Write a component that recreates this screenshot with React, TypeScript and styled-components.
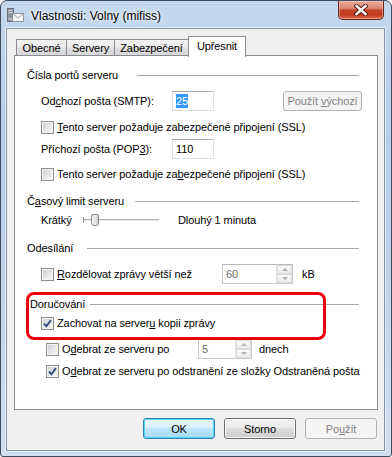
import styled, { createGlobalStyle } from "styled-components";

const GlobalStyle = createGlobalStyle`
  html, body { margin: 0; padding: 0; background: #ffffff; }
  body {
    font-family: "Liberation Sans", Arial, sans-serif;
    font-size: 11px;
    letter-spacing: -0.1px;
    color: #000;
  }
  * { box-sizing: border-box; }
`;

const Window = styled.div`
  width: 392px;
  height: 457px;
  display: flex;
  flex-direction: column;
  border: 1px solid #3e4d5f;
  border-radius: 7px 7px 3px 3px;
  background: linear-gradient(180deg, #c3d8ee 0%, #b6cee8 30%, #c2d6ec 70%, #cfdff1 100%);
  padding: 0 6px 5px 5px;
  overflow: hidden;
`;

const TitleBar = styled.div`
  height: 27px;
  flex: none;
  display: flex;
  align-items: flex-start;
`;

const TitleIcon = styled.svg`
  margin: 7px 0 0 1px;
  flex: none;
`;

const TitleText = styled.span`
  margin: 8px 0 0 7px;
  font-size: 12px;
  line-height: 14px;
  letter-spacing: 0;
  color: #000;
  text-shadow: 0 0 6px #ffffff, 0 0 3px #ffffff;
`;

const CloseButton = styled.div`
  margin-left: auto;
  margin-right: 1px;
  width: 46px;
  height: 19px;
  border: 1px solid #6b2418;
  border-top: none;
  border-radius: 0 0 5px 5px;
  background: linear-gradient(180deg, #e9a99a 0%, #dc8a76 40%, #c5442b 50%, #c0391f 75%, #d66a4d 100%);
  box-shadow: inset 0 0 0 1px rgba(255, 220, 210, 0.45);
  display: flex;
  align-items: center;
  justify-content: center;
`;

const Client = styled.div`
  flex: 1;
  display: flex;
  flex-direction: column;
  background: #f0f0f0;
  border: 1px solid #8595a9;
  box-shadow: 0 0 0 1px rgba(255, 255, 255, 0.55);
  padding: 7px 6px 0 7px;
`;

const TabRow = styled.div`
  height: 19px;
  flex: none;
  display: flex;
  align-items: flex-end;
  padding-left: 2px;
  position: relative;
  z-index: 1;
`;

const Tab = styled.div<{ $width: number; $active?: boolean }>`
  width: ${(p) => p.$width}px;
  height: ${(p) => (p.$active ? 21 : 16)}px;
  margin-left: -1px;
  margin-bottom: ${(p) => (p.$active ? -2 : 0)}px;
  border: 1px solid #898c95;
  border-bottom: none;
  background: ${(p) =>
    p.$active ? "#ffffff" : "linear-gradient(180deg, #f3f3f3 0%, #ebebeb 45%, #dedede 55%, #d8d8d8 100%)"};
  display: flex;
  align-items: ${(p) => (p.$active ? "flex-start" : "center")};
  justify-content: center;
  padding-top: ${(p) => (p.$active ? 3 : 0)}px;
  &:first-child { margin-left: 0; }
`;

const Panel = styled.div`
  height: 355px;
  flex: none;
  border: 1px solid #898c95;
  background: #ffffff;
  position: relative;
  display: flex;
  flex-direction: column;
  padding: 0 18px 0 12px;
`;

const Header = styled.div<{ $top: number }>`
  height: 16px;
  margin-top: ${(p) => p.$top}px;
  display: flex;
  align-items: center;
`;

const HeaderLabel = styled.span<{ $width: number; $pad?: number }>`
  width: ${(p) => p.$width}px;
  padding-left: ${(p) => p.$pad ?? 0}px;
  flex: none;
  white-space: nowrap;
`;

const Rule = styled.div`
  flex: 1;
  height: 0;
  border-top: 1px solid #a6a6a6;
`;

const Row = styled.div<{ $top: number; $indent?: number; $height?: number }>`
  height: ${(p) => p.$height ?? 16}px;
  margin-top: ${(p) => p.$top}px;
  padding-left: ${(p) => p.$indent ?? 14}px;
  display: flex;
  align-items: center;
  white-space: nowrap;
`;

const FieldLabel = styled.span<{ $width: number }>`
  width: ${(p) => p.$width}px;
  flex: none;
`;

const CheckItem = styled.label<{ $width?: number }>`
  display: flex;
  align-items: center;
  gap: 3px;
  flex: none;
  width: ${(p) => (p.$width ? `${p.$width}px` : "auto")};
`;

const Box = styled.span`
  width: 13px;
  height: 13px;
  flex: none;
  border: 1px solid #8e8f8f;
  background: linear-gradient(135deg, #cbcfd5 0%, #e6e7e9 55%, #f8f8f8 100%);
  box-shadow: inset 0 0 0 1px #f4f4f4;
  display: flex;
  align-items: center;
  justify-content: center;
`;

const TextBox = styled.div<{ $width: number; $disabled?: boolean }>`
  width: ${(p) => p.$width}px;
  height: 20px;
  flex: none;
  border: 1px solid ${(p) => (p.$disabled ? "#c9cbcf" : "#dbdfe6")};
  border-top-color: ${(p) => (p.$disabled ? "#b8babe" : "#abadb3")};
  background: #ffffff;
  color: ${(p) => (p.$disabled ? "#6d6d6d" : "#000")};
  display: flex;
  align-items: center;
  padding-left: 3px;
  position: relative;
`;

const Selected = styled.span`
  background: #3399ff;
  color: #ffffff;
  padding: 1px 0;
`;

const SpinButtons = styled.div`
  margin-left: auto;
  width: 16px;
  height: 100%;
  display: flex;
  flex-direction: column;
  border-left: 1px solid #e3e3e3;
`;

const SpinHalf = styled.div`
  flex: 1;
  background: linear-gradient(180deg, #fafafa, #ececec);
  border: 1px solid #dcdcdc;
  display: flex;
  align-items: center;
  justify-content: center;
`;

const Arrow = styled.span<{ $up?: boolean }>`
  width: 0;
  height: 0;
  border-left: 3px solid transparent;
  border-right: 3px solid transparent;
  ${(p) => (p.$up ? "border-bottom: 3px solid #b4b4b4;" : "border-top: 3px solid #b4b4b4;")}
`;

const Unit = styled.span<{ $gap: number }>`
  margin-left: ${(p) => p.$gap}px;
`;

const Button = styled.div<{ $width: number; $focused?: boolean; $disabled?: boolean }>`
  width: ${(p) => p.$width}px;
  height: 21px;
  flex: none;
  border: 1px solid ${(p) => (p.$focused ? "#3c7fb1" : p.$disabled ? "#adb2b5" : "#707070")};
  border-radius: 3px;
  background: ${(p) =>
    p.$disabled
      ? "#f4f4f4"
      : p.$focused
      ? "linear-gradient(180deg, #eaf6fd 0%, #d9f0fc 45%, #bee6fd 50%, #a7d9f5 100%)"
      : "linear-gradient(180deg, #f2f2f2 0%, #ebebeb 45%, #dddddd 50%, #cfcfcf 100%)"};
  box-shadow: ${(p) =>
    p.$focused ? "inset 0 0 0 1px #48d8fb" : p.$disabled ? "none" : "inset 0 0 0 1px rgba(255,255,255,0.7)"};
  color: ${(p) => (p.$disabled ? "#838383" : "#000")};
  display: flex;
  align-items: center;
  justify-content: center;
`;

const InlineButton = styled(Button)`
  margin-left: 69px;
  height: 20px;
`;

const Slider = styled.div`
  width: 76px;
  height: 16px;
  flex: none;
  position: relative;
`;

const Track = styled.div`
  position: absolute;
  left: 0;
  right: 0;
  top: 7px;
  height: 2px;
  border-top: 1px solid #b0b0b0;
  border-bottom: 1px solid #e7eaea;
`;

const Tick = styled.div`
  position: absolute;
  left: 0;
  top: 5px;
  width: 1px;
  height: 6px;
  background: #9a9a9a;
`;

const Thumb = styled.div`
  position: absolute;
  left: 8px;
  top: 2px;
  width: 8px;
  height: 12px;
  border: 1px solid #8a8a8a;
  border-radius: 2px 2px 3px 3px;
  background: linear-gradient(90deg, #f6f6f6 0%, #e4e4e4 60%, #cfcfcf 100%);
`;

const ButtonRow = styled.div`
  margin-top: 8px;
  display: flex;
  justify-content: flex-end;
  gap: 9px;
  padding-right: 1px;
`;

const Annotation = styled.div`
  position: absolute;
  left: 11px;
  top: 236px;
  width: 300px;
  height: 48px;
  border: 3px solid #e8000d;
  border-radius: 8px;
  pointer-events: none;
`;

function Check({ checked }: { checked?: boolean }) {
  return (
    <Box>
      {checked && (
        <svg width="9" height="9" viewBox="0 0 9 9">
          <path d="M1 4.6 L3.4 7.2 L8 1.2" fill="none" stroke="#3b4f85" strokeWidth="1.9" />
        </svg>
      )}
    </Box>
  );
}

function Spin({ width, value }: { width: number; value: string }) {
  return (
    <TextBox $width={width} $disabled>
      {value}
      <SpinButtons>
        <SpinHalf>
          <Arrow $up />
        </SpinHalf>
        <SpinHalf>
          <Arrow />
        </SpinHalf>
      </SpinButtons>
    </TextBox>
  );
}

export default function App() {
  return (
    <>
      <GlobalStyle />
      <Window>
        <TitleBar>
          <TitleIcon width="17" height="14" viewBox="0 0 17 14">
            <rect x="0.5" y="0.5" width="6" height="13" fill="#8d949b" stroke="#6a7078" />
            <rect x="1.5" y="2" width="4" height="1" fill="#d6dade" />
            <rect x="1.5" y="4" width="4" height="1" fill="#d6dade" />
            <rect x="1.5" y="10" width="4" height="2" fill="#b9bec4" />
            <rect x="5.5" y="5.5" width="11" height="8" fill="#f6f6f6" stroke="#8e969e" />
            <path d="M5.5 5.5 L11 10 L16.5 5.5" fill="none" stroke="#9aa2aa" />
          </TitleIcon>
          <TitleText>Vlastnosti: Volny (mifiss)</TitleText>
          <CloseButton>
            <svg width="14" height="12" viewBox="0 0 14 12">
              <path d="M2.5 2 L11.5 10 M11.5 2 L2.5 10" stroke="#5a1a0e" strokeWidth="4.4" strokeLinecap="square" />
              <path d="M2.5 2 L11.5 10 M11.5 2 L2.5 10" stroke="#ffffff" strokeWidth="2.4" strokeLinecap="square" />
            </svg>
          </CloseButton>
        </TitleBar>
        <Client>
          <TabRow>
            <Tab $width={51}>Obecné</Tab>
            <Tab $width={49}>Servery</Tab>
            <Tab $width={75}>Zabezpečení</Tab>
            <Tab $width={58} $active>
              Upřesnit
            </Tab>
          </TabRow>
          <Panel>
            <Header $top={11}>
              <HeaderLabel $width={110}>Čísla portů serveru</HeaderLabel>
              <Rule />
            </Header>
            <Row $top={8} $height={20}>
              <FieldLabel $width={131}>
                Od<u>c</u>hozí pošta (SMTP):
              </FieldLabel>
              <TextBox $width={42}>
                <Selected>25</Selected>
              </TextBox>
              <InlineButton $width={79} $disabled>
                Použít&nbsp;<u>v</u>ýchozí
              </InlineButton>
            </Row>
            <Row $top={8}>
              <CheckItem>
                <Check />
                <span>
                  <u>T</u>ento server požaduje zabezpečené připojení (SSL)
                </span>
              </CheckItem>
            </Row>
            <Row $top={4} $height={20}>
              <FieldLabel $width={131}>
                Příchozí pošta (POP<u>3</u>):
              </FieldLabel>
              <TextBox $width={42}>110</TextBox>
            </Row>
            <Row $top={7}>
              <CheckItem>
                <Check />
                <span>
                  Tento server požaduje za<u>b</u>ezpečené připojení (SSL)
                </span>
              </CheckItem>
            </Row>
            <Header $top={11}>
              <HeaderLabel $width={108}>
                Č<u>a</u>sový limit serveru
              </HeaderLabel>
              <Rule />
            </Header>
            <Row $top={3}>
              <FieldLabel $width={42}>Krátký</FieldLabel>
              <Slider>
                <Track />
                <Tick />
                <Thumb />
              </Slider>
              <Unit $gap={19}>Dlouhý 1 minuta</Unit>
            </Row>
            <Header $top={12}>
              <HeaderLabel $width={60}>Odesílání</HeaderLabel>
              <Rule />
            </Header>
            <Row $top={8} $height={20}>
              <CheckItem $width={181}>
                <Check />
                <span>
                  <u>R</u>ozdělovat zprávy větší než
                </span>
              </CheckItem>
              <Spin width={71} value="60" />
              <Unit $gap={9}>kB</Unit>
            </Row>
            <Header $top={12}>
              <HeaderLabel $width={63} $pad={3}>
                Doručování
              </HeaderLabel>
              <Rule />
            </Header>
            <Row $top={3}>
              <CheckItem>
                <Check checked />
                <span>
                  Zachovat na server<u>u</u> kopii zprávy
                </span>
              </CheckItem>
            </Row>
            <Row $top={8} $indent={19} $height={20}>
              <CheckItem $width={152}>
                <Check />
                <span>
                  O<u>d</u>ebrat ze serveru po
                </span>
              </CheckItem>
              <Spin width={54} value="5" />
              <Unit $gap={7}>dnech</Unit>
            </Row>
            <Row $top={4} $indent={19}>
              <CheckItem>
                <Check checked />
                <span>
                  O<u>d</u>ebrat ze serveru po odstranění ze složky Odstraněná pošta
                </span>
              </CheckItem>
            </Row>
            <Annotation />
          </Panel>
          <ButtonRow>
            <Button $width={72} $focused>
              OK
            </Button>
            <Button $width={72}>Storno</Button>
            <Button $width={72} $disabled>
              Po<u>u</u>žít
            </Button>
          </ButtonRow>
        </Client>
      </Window>
    </>
  );
}
